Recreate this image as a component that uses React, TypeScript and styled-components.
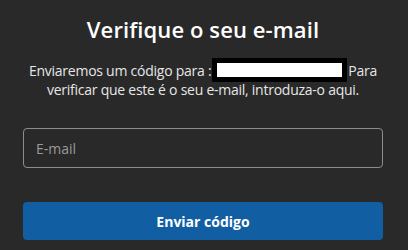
import React from "react";
import styled, { createGlobalStyle } from "styled-components";

const Global = createGlobalStyle`
  html, body { margin: 0; padding: 0; background: #292929; }
  body { font-family: "Open Sans", "Noto Sans", sans-serif; }
`;

const Page = styled.div`
  width: 408px;
  height: 250px;
  box-sizing: border-box;
  padding: 14px 25px 0 23px;
  display: flex;
  flex-direction: column;
  align-items: stretch;
`;

const Title = styled.h1`
  margin: 0;
  text-align: center;
  color: #ffffff;
  font-size: 22px;
  font-weight: 600;
  line-height: 30px;
  letter-spacing: 0.1px;
`;

const Lead = styled.p`
  margin: 17px 0 0;
  text-align: center;
  color: #e6e6e6;
  font-size: 14px;
  line-height: 19px;
  letter-spacing: -0.25px;
`;

const Redacted = styled.span`
  position: relative;
  display: inline-block;
  width: 137px;
`;

const RedactBox = styled.span`
  position: absolute;
  left: 1px;
  top: -3px;
  box-sizing: content-box;
  width: 125px;
  height: 14px;
  background: #ffffff;
  border: 5px solid #000000;
`;

const Field = styled.input`
  margin-top: 29px;
  height: 40px;
  box-sizing: border-box;
  border: 1px solid #8c8c8c;
  border-radius: 4px;
  background: transparent;
  padding: 0 12px;
  color: #ffffff;
  font-family: inherit;
  font-size: 14px;
  outline: none;
  &::placeholder { color: #9a9a9a; }
`;

const Submit = styled.button`
  margin-top: 34px;
  height: 38px;
  border: none;
  border-radius: 4px;
  background: #115ea3;
  color: #ffffff;
  font-family: inherit;
  font-size: 14px;
  font-weight: 700;
  cursor: pointer;
`;

export default function App() {
  return (
    <>
      <Global />
      <Page>
        <Title>Verifique o seu e-mail</Title>
        <Lead>
          Enviaremos um código para :
          <Redacted>
            &nbsp;
            <RedactBox />
          </Redacted>
          Para verificar que este é o seu e-mail, introduza-o aqui.
        </Lead>
        <Field placeholder="E-mail" />
        <Submit>Enviar código</Submit>
      </Page>
    </>
  );
}
